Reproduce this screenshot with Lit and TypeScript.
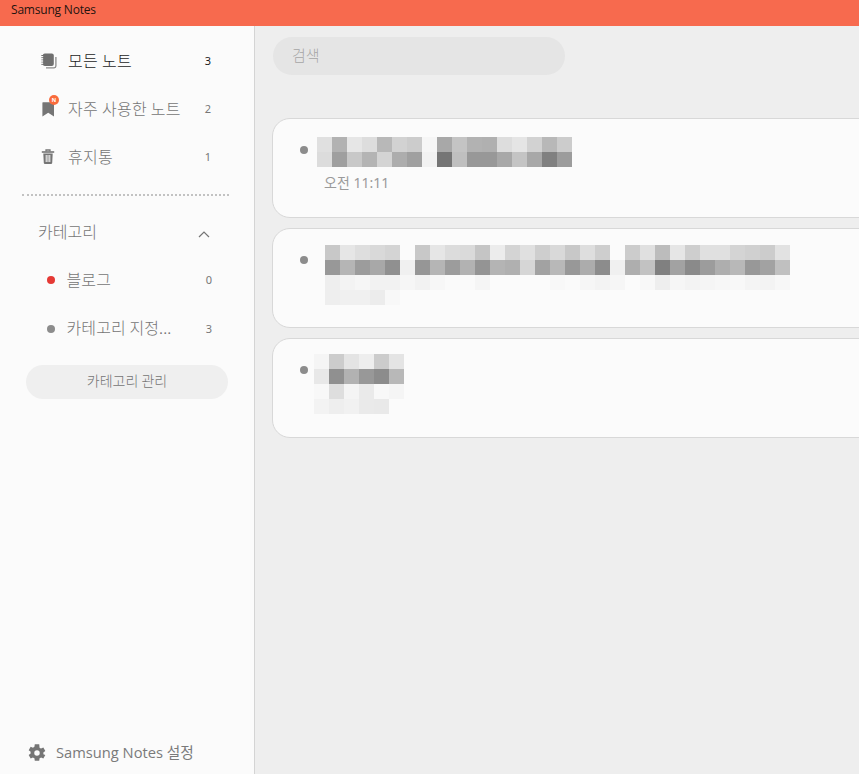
import { LitElement, html, css, svg } from "lit";
import { customElement } from "lit/decorators.js";

type Note = { left: number; top: number; rows: string[][]; time?: string };

const r = (s: string) => s.split(" ");

const notes: Note[] = [
  {
    left: 9, top: 18,
    rows: [
      r("e0 b2 e6 dd b8 d2 cc f6 a8 c4 b2 b0 dd e5 d2 b8 cc"),
      r("dc 9f c8 b4 d4 ad a0 f2 75 bf 98 98 a8 c4 a8 80 9c"),
    ],
    time: "오전 11:11",
  },
  {
    left: 17, top: 16,
    rows: [
      r("c8 e6 de d9 d4 fb c8 e6 dc da c5 ec d4 e0 ce d9 c8 de ce fb cc e0 bc e6 ce e0 e0 d4 d0 cc e2"),
      r("98 b5 9c a8 90 f0 96 b5 9c b2 94 b4 b0 d6 a2 b8 98 ac 8c f0 ae c2 80 a2 8a 9c ae b8 98 a2 c0"),
      r("ee f3 f6 f2 f2 f6 f2 f7 fa fa f5 fb fb fb fb f8 fa f6 f3 f6 fb f8 ee f6 f3 f5 f7 f8 f4 f3 f7"),
      r("ee f0 f0 ec f8"),
    ],
  },
  {
    left: 6, top: 15,
    rows: [
      r("f5 cc e4 ee cc e4"),
      r("e8 90 b2 98 8c b8"),
      r("f8 de f4 ea f8 f5"),
      r("f3 ee f1 ea e9"),
    ],
  },
];

const notesIcon = svg`<svg width="16" height="16" viewBox="0 0 16 16">
  <path d="M5 14.800h8.200a1.700 1.700 0 0 0 1.700-1.700V4" fill="none" stroke="#8a8a8a" stroke-width="1.300"/>
  <rect x="1.800" y="0.500" width="11" height="12.500" rx="2" fill="#6f6f6f"/>
  <path d="M.3 2.500h2.500M.3 4.700h2.500M.3 6.900h2.500M.3 9.100h2.500M.3 11.300h2.500" stroke="#6f6f6f" stroke-width="1"/>
  <path d="M.3 3.600h1.900M.3 5.800h1.900M.3 8h1.900M.3 10.200h1.900" stroke="#fbfbfb" stroke-width="1"/>
</svg>`;

const bookmarkIcon = svg`<svg width="14" height="16" viewBox="0 0 14 16">
  <path d="M2 1.200h10.400a.6.6 0 0 1 .6.600v13.600l-5.800-3.600-5.800 3.600V1.800a.6.6 0 0 1 .6-.600z" fill="#757575"/>
</svg>`;

const trashIcon = svg`<svg width="14" height="16" viewBox="0 0 14 16">
  <path d="M5 2.400V1h4v1.400" fill="none" stroke="#757575" stroke-width="1.300"/>
  <path d="M.8 3h12.400" stroke="#757575" stroke-width="1.600"/>
  <path d="M2.300 4.400h9.400l-.5 9.600a1.200 1.200 0 0 1-1.200 1.100H4a1.200 1.200 0 0 1-1.200-1.100z" fill="#757575"/>
  <path d="M5.200 6v7M7 6v7M8.800 6v7" stroke="#fbfbfb" stroke-width="1"/>
</svg>`;

const gearIcon = svg`<svg width="18" height="18" viewBox="1.500 1 21 21">
  <path fill="#757575" fill-rule="evenodd" d="M19.400 13a7.600 7.600 0 0 0 0-2l2.300-1.800-2.300-4-2.700 1.100a7.500 7.500 0 0 0-1.700-1L14.600 1.400H9.400L9 4.300a7.500 7.500 0 0 0-1.700 1L4.600 4.200l-2.300 4L4.600 10a7.600 7.600 0 0 0 0 2l-2.300 1.800 2.300 4 2.700-1.100a7.500 7.500 0 0 0 1.700 1l.4 2.900h5.200l.4-2.900a7.500 7.500 0 0 0 1.700-1l2.700 1.100 2.300-4zM12 14.700a3.200 3.200 0 1 1 0-6.400a3.200 3.200 0 0 1 0 6.400z"/>
</svg>`;

const chevron = svg`<svg width="12" height="7" viewBox="0 0 12 7">
  <path d="M1 6l5-5 5 5" fill="none" stroke="#757575" stroke-width="1.200"/>
</svg>`;

@customElement("app-root")
export class AppRoot extends LitElement {
  static styles = css`
    :host {
      display: flex;
      flex-direction: column;
      width: 859px;
      height: 774px;
      overflow: hidden;
      background: #eeeeee;
      font-family: "Noto Sans CJK KR", "Noto Sans", sans-serif;
    }
    .title {
      height: 26px;
      flex: none;
      background: #f76a4e;
      color: #1f1410;
      font: 12px/20px "Open Sans", "Noto Sans", sans-serif;
      letter-spacing: -0.2px;
      padding-left: 11px;
      box-sizing: border-box;
    }
    .body {
      flex: 1;
      display: flex;
      min-height: 0;
    }
    .side {
      width: 255px;
      flex: none;
      box-sizing: border-box;
      background: #fbfbfb;
      border-right: 1px solid #d4d4d4;
      display: flex;
      flex-direction: column;
      padding-top: 11px;
    }
    .row {
      height: 48px;
      display: grid;
      grid-template-columns: 27px 1fr auto;
      align-items: center;
      padding: 0 43px 0 41px;
      font-size: 16px;
      letter-spacing: 0.3px;
      font-weight: 300;
      color: #757575;
    }
    .label { padding-bottom: 2px; }
    .cat-label { padding-bottom: 3px; }
    .row.active .label { color: #1c1c1c; }
    .row.active .count { color: #1c1c1c; }
    .row .ic {
      position: relative;
      display: flex;
      height: 16px;
    }
    .badge {
      position: absolute;
      left: 8px;
      top: -6px;
      width: 10px;
      height: 10px;
      border-radius: 50%;
      background: #f96b3c;
      color: #fff;
      font: bold 6px/10px "Liberation Sans", sans-serif;
      letter-spacing: 0;
      text-align: center;
    }
    .count {
      font: 11px/14px "Noto Sans", sans-serif;
      letter-spacing: 0;
      color: #777;
    }
    .divider {
      margin: 13px 25px 0 22px;
      border-top: 2px dotted #c2c2c2;
      height: 0;
    }
    .cat-head {
      height: 48px;
      margin-top: 12px;
      display: flex;
      align-items: center;
      justify-content: space-between;
      padding: 0 44px 0 38px;
      font-size: 16px;
      font-weight: 300;
      color: #757575;
    }
    .cat-head svg { display: block; margin-top: 4px; }
    .cat {
      height: 48.500px;
      display: grid;
      grid-template-columns: 19.500px 1fr auto;
      align-items: center;
      padding: 0 42px 0 47px;
      font-size: 16px;
      letter-spacing: 0.1px;
      font-weight: 300;
      color: #757575;
    }
    .dot {
      width: 8px;
      height: 8px;
      border-radius: 50%;
      background: #8c8c8c;
    }
    .dot.red { background: #e53935; }
    .manage {
      margin: 12px 26px 0;
      height: 34px;
      border: 0;
      border-radius: 17px;
      background: #efefef;
      color: #757575;
      font: 300 14px "Noto Sans CJK KR", sans-serif;
      padding: 0 0 4px;
    }
    .settings {
      margin-top: auto;
      height: 42px;
      display: flex;
      align-items: center;
      gap: 10px;
      padding-left: 28px;
      color: #7a7a7a;
      font: 14.700px "Open Sans", "Noto Sans CJK KR", sans-serif;
    }
    .settings svg { display: block; }
    .settings span { padding-bottom: 3px; }
    .main {
      flex: 1;
      min-width: 0;
      overflow: hidden;
      padding: 11px 0 0 17px;
    }
    .search {
      width: 292px;
      height: 38px;
      margin-left: 1px;
      box-sizing: border-box;
      padding-left: 19px;
      border-radius: 19px;
      background: #e5e5e5;
      color: #a6a6a6;
      font-size: 15px;
      font-weight: 300;
      line-height: 36px;
    }
    .list {
      margin: 43px -40px 0 0;
      display: flex;
      flex-direction: column;
      gap: 10px;
    }
    .card {
      height: 100px;
      box-sizing: border-box;
      border: 1px solid #d8d8d8;
      border-radius: 18px;
      background: #fbfbfb;
      display: flex;
      align-items: flex-start;
      padding-left: 27px;
    }
    .card .dot { margin-top: 27px; flex: none; }
    .mosaic {
      display: flex;
      flex-direction: column;
    }
    .mrow { display: flex; height: 15px; }
    .mrow i { display: block; width: 15px; height: 15px; }
    .time {
      margin: 7px 0 0 7px;
      font: 14px/18px "Noto Sans", "Noto Sans CJK KR", sans-serif;
      color: #9a9a9a;
    }
  `;

  render() {
    return html`
      <div class="title">Samsung Notes</div>
      <div class="body">
        <aside class="side">
          <div class="row active">
            <span class="ic">${notesIcon}</span>
            <span class="label">모든 노트</span>
            <span class="count">3</span>
          </div>
          <div class="row">
            <span class="ic">${bookmarkIcon}<span class="badge">N</span></span>
            <span class="label">자주 사용한 노트</span>
            <span class="count">2</span>
          </div>
          <div class="row">
            <span class="ic">${trashIcon}</span>
            <span class="label">휴지통</span>
            <span class="count">1</span>
          </div>
          <div class="divider"></div>
          <div class="cat-head"><span class="cat-label">카테고리</span>${chevron}</div>
          <div class="cat">
            <span class="dot red"></span><span class="cat-label">블로그</span><span class="count">0</span>
          </div>
          <div class="cat">
            <span class="dot"></span><span class="cat-label">카테고리 지정...</span><span class="count">3</span>
          </div>
          <button class="manage">카테고리 관리</button>
          <div class="settings">${gearIcon}<span>Samsung Notes 설정</span></div>
        </aside>
        <main class="main">
          <div class="search">검색</div>
          <div class="list">
            ${notes.map(
              (n) => html`
                <div class="card">
                  <span class="dot"></span>
                  <div class="mosaic" style="margin:${n.top}px 0 0 ${n.left}px">
                    ${n.rows.map(
                      (row) => html`<div class="mrow">
                        ${row.map((c) => html`<i style="background:#${c}${c}${c}"></i>`)}
                      </div>`
                    )}
                    ${n.time ? html`<div class="time">${n.time}</div>` : ""}
                  </div>
                </div>
              `
            )}
          </div>
        </main>
      </div>
    `;
  }
}
